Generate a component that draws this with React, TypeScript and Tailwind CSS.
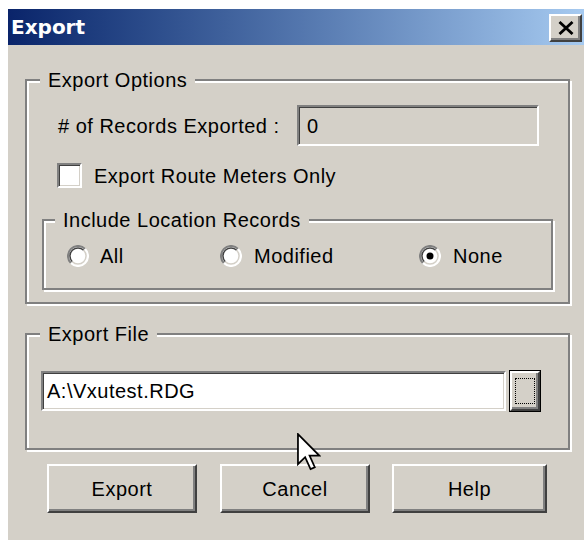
import React from 'react';

// Win2000-style bevels
const etched = 'border-2 border-[#808080] shadow-[2px_2px_0_#ffffff,inset_2px_2px_0_#ffffff]';
const sunken =
  'border-2 border-t-[#808080] border-l-[#808080] border-b-white border-r-white shadow-[inset_1px_1px_0_#404040,inset_-1px_-1px_0_#d4d0c8]';
const raised =
  'border-2 border-t-white border-l-white border-b-[#404040] border-r-[#404040] shadow-[inset_-2px_-2px_0_#808080]';

function GroupBox({
  title,
  className = '',
  legendClass = 'ml-[13px]',
  children,
}: {
  title: string;
  className?: string;
  legendClass?: string;
  children: React.ReactNode;
}) {
  return (
    <div className={`flex flex-col ${etched} ${className}`}>
      <div className={`-mt-[11px] self-start bg-[#d4d0c8] px-[8px] leading-[20px] ${legendClass}`}>{title}</div>
      {children}
    </div>
  );
}

function Radio({ checked = false }: { checked?: boolean }) {
  return (
    <svg width="22" height="22" viewBox="0 0 22 22" className="shrink-0">
      <circle cx="11" cy="11" r="10" fill="#ffffff" />
      <path d="M3.9 18.1 A10 10 0 0 1 18.1 3.9" stroke="#808080" strokeWidth="2" fill="none" />
      <path d="M5.3 16.7 A8 8 0 0 1 16.7 5.3" stroke="#404040" strokeWidth="1.5" fill="none" />
      <path d="M18.1 3.9 A10 10 0 0 1 3.9 18.1" stroke="#ffffff" strokeWidth="2" fill="none" />
      <path d="M16.7 5.3 A8 8 0 0 1 5.3 16.7" stroke="#d4d0c8" strokeWidth="1.5" fill="none" />
      {checked && <circle cx="11" cy="11" r="3.5" fill="#000000" />}
    </svg>
  );
}

function PushButton({ label, width }: { label: string; width: string }) {
  return (
    <button className={`${width} h-[49px] bg-[#d4d0c8] ${raised} flex items-center justify-center`}>{label}</button>
  );
}

export default function App() {
  return (
    <div className="relative h-[540px] w-[584px] overflow-hidden bg-white pl-[8px] pt-[9px] font-['Liberation_Sans',Arial,sans-serif] text-[20px] leading-[22px] tracking-[0.5px] text-black">
      <div className="flex h-full flex-col bg-[#d4d0c8]">
        {/* Caption */}
        <div className="flex h-[36px] items-center justify-between bg-gradient-to-r from-[#0a246a] to-[#a6caf0] pl-[3px] pr-[2px]">
          <span className="font-['DejaVu_Sans',Verdana,sans-serif] text-[20px] font-bold tracking-normal text-white">Export</span>
          <div className={`mt-[2px] flex h-[28px] w-[33px] items-center justify-center bg-[#d4d0c8] ${raised}`}>
            <svg width="16" height="14" viewBox="0 0 16 14">
              <path d="M1.5 1 L14.5 13 M14.5 1 L1.5 13" stroke="#000000" strokeWidth="2.8" />
            </svg>
          </div>
        </div>

        <div className="flex flex-col pl-[17px] pr-[14px]">
          {/* Export Options */}
          <GroupBox title="Export Options" className="mt-[34px] pb-[12px]">
            <div className="mt-[15px] flex items-center pl-[31px]">
              <span className="w-[239px]">{'# of Records Exported :'}</span>
              <div className={`flex h-[41px] w-[242px] items-center bg-[#d4d0c8] pl-[8px] ${sunken}`}>0</div>
            </div>
            <div className="mt-[17px] flex items-center pl-[30px]">
              <div className={`h-[25px] w-[25px] bg-white ${sunken}`} />
              <span className="ml-[12px]">Export Route Meters Only</span>
            </div>
            <GroupBox title="Include Location Records" legendClass="ml-[11px]" className="mx-[15px] mt-[31px] pb-[21px]">
              <div className="mt-[15px] flex items-center pl-[23px]">
                <div className="flex w-[153px] items-center gap-[11px]">
                  <Radio />
                  <span>All</span>
                </div>
                <div className="flex w-[199px] items-center gap-[12px]">
                  <Radio />
                  <span>Modified</span>
                </div>
                <div className="flex items-center gap-[12px]">
                  <Radio checked />
                  <span>None</span>
                </div>
              </div>
            </GroupBox>
          </GroupBox>

          {/* Export File */}
          <GroupBox title="Export File" className="mt-[29px] pb-[36px]">
            <div className="mt-[26px] flex items-center pl-[14px]">
              <div className={`flex h-[40px] w-[465px] items-center bg-white pl-[4px] ${sunken}`}>A:\Vxutest.RDG</div>
              <div className="ml-[3px] flex h-[42px] w-[32px] border border-black">
                <div className={`flex flex-1 items-center justify-center bg-[#d4d0c8] ${raised}`}>
                  <div className="h-[26px] w-[20px] border border-dotted border-black" />
                </div>
              </div>
            </div>
          </GroupBox>

          <div className="mt-[14px] flex pl-[22px]">
            <PushButton label="Export" width="w-[150px]" />
            <div className="w-[23px]" />
            <PushButton label="Cancel" width="w-[150px]" />
            <div className="w-[22px]" />
            <PushButton label="Help" width="w-[155px]" />
          </div>
        </div>
      </div>

      {/* mouse pointer */}
      <svg className="absolute left-[297px] top-[433px]" width="24" height="39" viewBox="0 0 12.4 20">
        <path
          d="M0.5 0.5 L0.5 16 L4.2 12.4 L7 18.6 L9.2 17.6 L6.5 11.6 L11.5 11.6 Z"
          fill="#ffffff"
          stroke="#000000"
          strokeWidth="0.9"
          strokeLinejoin="miter"
        />
      </svg>
    </div>
  );
}
